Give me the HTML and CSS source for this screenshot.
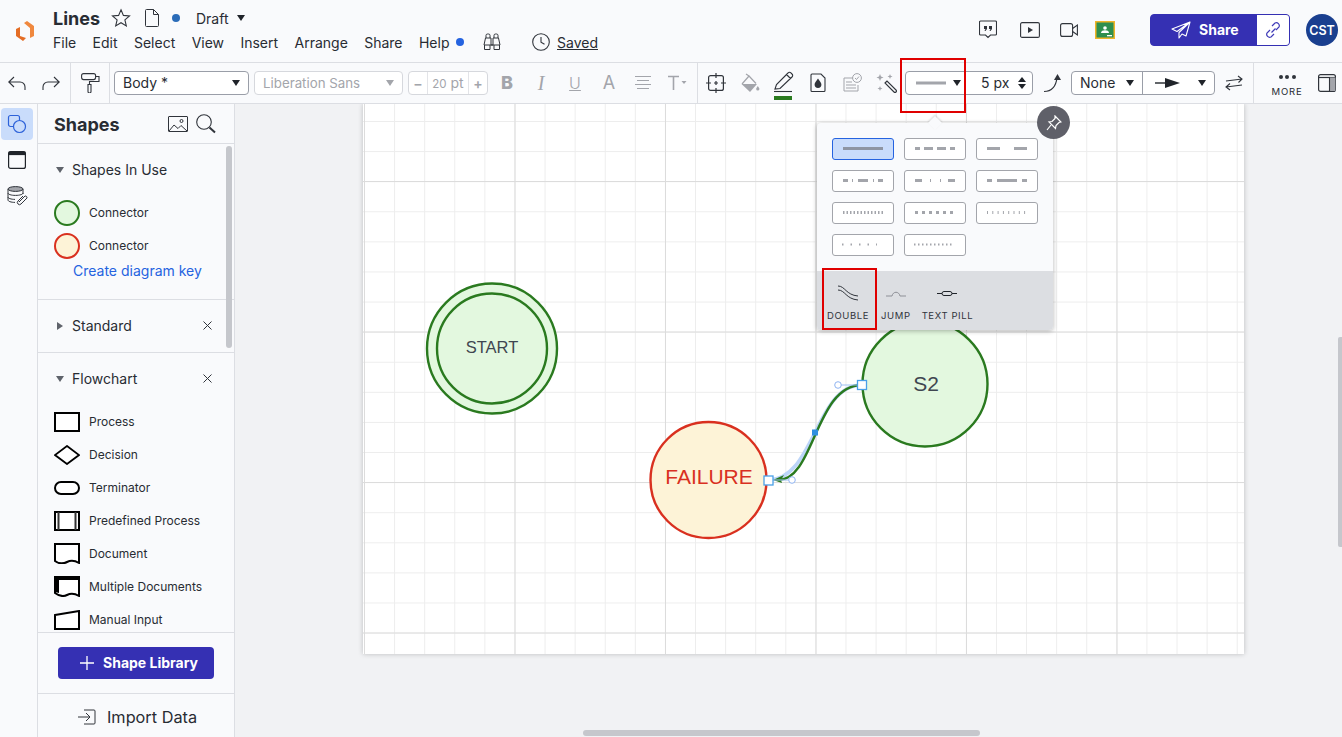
FILE: index.html
```html
<!DOCTYPE html>
<html lang="en">
<head>
<meta charset="utf-8">
<title>Lines</title>
<link rel="stylesheet" href="styles.css">
</head>
<body>
<header class="topbar">
  <svg class="logo" width="18" height="21" viewBox="0 0 18 21"><path d="M8 3 11 1l7 5v10l-4 2V8z" fill="#f0883e"/><path d="M0 9l4-2v9l6 2-3 3-7-5z" fill="#e46d25"/></svg>
  <div class="titles">
    <div class="title-row">
      <span class="doc-name">Lines</span>
      <svg class="star" width="20" height="20" viewBox="0 0 20 20"><path d="M10 1.800l2.400 5.600 6.100.5-4.600 4 1.400 6-5.300-3.200-5.300 3.200 1.400-6-4.600-4 6.100-.5z" fill="none" stroke="#30343b" stroke-width="1.100"/></svg>
      <svg class="doc" width="14" height="18" viewBox="0 0 14 18"><path d="M1.500.5h7l5 5v11a1 1 0 0 1-1 1h-11a1 1 0 0 1-1-1v-15a1 1 0 0 1 1-1zM8.500.5v5h5" fill="none" stroke="#30343b" stroke-width="1"/></svg>
      <span class="status-dot"></span>
      <span class="draft">Draft</span>
      <span class="caret draft-caret"></span>
    </div>
    <nav class="menu">
      <span>File</span><span>Edit</span><span>Select</span><span>View</span><span>Insert</span><span>Arrange</span><span>Share</span><span>Help</span>
      <span class="help-dot"></span>
      <svg class="binoculars" width="18" height="18" viewBox="0 0 18 18"><path d="M3 5V2.500A1.500 1.500 0 0 1 4.500 1h1A1.500 1.500 0 0 1 7 2.500V5M11 5V2.500A1.500 1.500 0 0 1 12.500 1h1A1.500 1.500 0 0 1 15 2.500V5M2.500 5H8v7H10V5h5.500l1.500 7H1zM1.500 12v4.500h5.500V12M11 12v4.500h5.500V12" fill="none" stroke="#30343b" stroke-width="1"/></svg>
      <svg class="clock" width="18" height="18" viewBox="0 0 18 18"><circle cx="9" cy="9" r="8.300" fill="none" stroke="#30343b" stroke-width="1.100"/><path d="M9 4v5.300l3.500 2" fill="none" stroke="#30343b" stroke-width="1.100"/></svg>
      <span class="saved">Saved</span>
    </nav>
  </div>
  <div class="top-actions">
    <svg width="18" height="20" viewBox="0 0 18 20"><path d="M1.500 1h15a1 1 0 0 1 1 1v12a1 1 0 0 1-1 1h-5L9 17.500 6.500 15h-5a1 1 0 0 1-1-1V2a1 1 0 0 1 1-1z" fill="none" stroke="#30343b" stroke-width="1.100"/><path d="M5 6h3v3l-1.500 2H5.500L6.500 9H5zM10 6h3v3l-1.500 2h-1l1-2H10z" fill="#30343b"/></svg>
    <svg width="20" height="16" viewBox="0 0 20 16"><rect x=".6" y=".6" width="18.800" height="14.800" rx="1.500" fill="none" stroke="#30343b" stroke-width="1.100"/><path d="M8 5l5 3-5 3z" fill="#30343b"/></svg>
    <svg width="18" height="14" viewBox="0 0 18 14"><rect x=".6" y=".6" width="12" height="12.800" rx="2" fill="none" stroke="#30343b" stroke-width="1.100"/><path d="M12.600 5.500l4.800-3.500v10l-4.800-3.500" fill="none" stroke="#30343b" stroke-width="1.100"/></svg>
    <svg class="classroom" width="20" height="18" viewBox="0 0 20 18"><rect width="20" height="18" fill="#f0b429"/><rect x="1.500" y="1.500" width="17" height="15" fill="#2f8f4e"/><circle cx="10" cy="7" r="1.800" fill="#fff"/><path d="M6 12c0-2 2-2.700 4-2.700s4 .7 4 2.700z" fill="#fff"/><rect x="12" y="14" width="5" height="1.300" fill="#fff"/></svg>
    <div class="share-btn">
      <div class="share-main">
        <svg width="20" height="18" viewBox="0 0 20 18"><path d="M19 1L1 8l5 2.500L19 1 8 11.500V17l3-4 4 2z" fill="none" stroke="#fff" stroke-width="1.100" stroke-linejoin="round"/></svg>
        <span>Share</span>
      </div>
      <div class="share-link">
        <svg width="18" height="18" viewBox="0 0 18 18"><path d="M7.500 11.500l4-4M6 9l-3 3a3 3 0 0 0 4 4l3-3M12 9l3-3a3 3 0 0 0-4-4L8 5" fill="none" stroke="#3f3bb8" stroke-width="1.200"/></svg>
      </div>
    </div>
    <div class="avatar">CST</div>
  </div>
</header>

<div class="toolbar">
  <div class="tgroup g-history">
    <svg width="18" height="18" viewBox="0 0 18 18"><path d="M6 3L.8 8 6 13M1 8h11a5 5 0 0 1 5 5v3" fill="none" stroke="#30343b" stroke-width="1.100"/></svg>
    <svg width="18" height="18" viewBox="0 0 18 18"><path d="M12 3l5.200 5L12 13M17 8H6a5 5 0 0 0-5 5v3" fill="none" stroke="#30343b" stroke-width="1.100"/></svg>
  </div>
  <div class="tgroup g-roller">
    <svg width="19" height="20" viewBox="0 0 19 20"><rect x=".6" y=".6" width="14" height="6" rx="2" fill="none" stroke="#30343b" stroke-width="1.100"/><path d="M14.600 3.500h3.400v5H8.500v3M7 11.500h3v7a1.500 1.500 0 0 1-3 0z" fill="none" stroke="#30343b" stroke-width="1.100"/></svg>
  </div>
  <div class="tgroup g-text">
    <div class="select sel-body"><span>Body *</span><i class="caret"></i></div>
    <div class="select sel-font disabled"><span>Liberation Sans</span><i class="caret"></i></div>
    <div class="size-group disabled">
      <b class="size-btn">&minus;</b><span class="size-val"><em>20</em> pt</span><b class="size-btn">+</b>
    </div>
    <div class="ticons">
      <span class="glyph g-b">B</span>
      <span class="glyph g-i">I</span>
      <span class="glyph g-u">U</span>
      <span class="glyph g-a">A</span>
      <svg width="20" height="16" viewBox="0 0 20 16"><path d="M2 1.500h16M4 5.500h12M2 9.500h16M4 13.500h12" stroke="#a3a5ab" stroke-width="1.100"/></svg>
      <svg width="20" height="16" viewBox="0 0 20 16"><path d="M1 1.500h11M6.500 1.500V15" stroke="#a3a5ab" stroke-width="1.600" fill="none"/><path d="M14.500 6h5l-2.500 3z" fill="#a3a5ab"/></svg>
    </div>
  </div>
  <div class="tgroup g-shape">
    <svg width="20" height="20" viewBox="0 0 20 20"><rect x="2.600" y="2.600" width="14.800" height="14.800" rx="2" fill="none" stroke="#30343b" stroke-width="1.200"/><path d="M10 0v5M10 15v5M0 10h5M15 10h5M8 10h4M10 8v4" stroke="#30343b" stroke-width="1.200"/></svg>
    <svg width="20" height="20" viewBox="0 0 20 20"><path d="M2 11L9 3l7 7.500M6 1l3 2" fill="none" stroke="#a3a5ab" stroke-width="1.200"/><path d="M1.500 11H17l-7 8z" fill="#a3a5ab"/><path d="M17.800 13c.9 1.400 1.600 2.100 1.600 3a1.600 1.600 0 0 1-3.200 0c0-.9.700-1.600 1.600-3z" fill="#a3a5ab"/></svg>
    <svg width="20" height="36" viewBox="0 0 20 36"><path d="M1 24l1.500-4.500L14 8a2 2 0 0 1 3 0l1 1a2 2 0 0 1 0 3L6 23.500zM12.500 9.500l4 4" fill="none" stroke="#30343b" stroke-width="1.100"/><path d="M0 26.500h18" stroke="#30343b" stroke-width="1.100"/><rect y="31" width="18" height="4" fill="#2a7a1f"/></svg>
    <svg width="20" height="20" viewBox="0 0 20 20"><path d="M3.500 1h9l4 4v12.500a1 1 0 0 1-1 1h-12a1 1 0 0 1-1-1v-15.500a1 1 0 0 1 1-1z" transform="translate(.5 0)" fill="none" stroke="#30343b" stroke-width="1.100"/><path d="M10 5.500c2 2.800 3.400 4.300 3.400 6a3.400 3.400 0 0 1-6.800 0c0-1.700 1.400-3.200 3.400-6z" fill="#30343b"/></svg>
    <svg width="20" height="20" viewBox="0 0 20 20"><path d="M11 5H2v13h14v-6M4 9h6M4 12h10M4 15h10" fill="none" stroke="#a3a5ab" stroke-width="1"/><circle cx="15" cy="5" r="4.400" fill="none" stroke="#a3a5ab"/><path d="M13 5l1.500 1.500 2.500-3" fill="none" stroke="#a3a5ab"/></svg>
    <svg width="21" height="21" viewBox="0 0 21 21"><path d="M9 10l2-2 9 9a1.400 1.400 0 0 1-2 2z" fill="none" stroke="#30343b" stroke-width="1.100"/><path d="M4 1l1 2.500 2.500 1L5 5.500 4 8 3 5.500.5 4.500 3 3.500zM14 1l.7 1.800 1.800.7-1.800.7L14 6l-.7-1.800-1.800-.7 1.800-.7zM4 13l.7 1.800 1.800.7-1.800.7L4 18l-.7-1.800-1.800-.7 1.800-.7z" fill="#a3a5ab"/></svg>
    <div class="select sel-line">
      <svg width="30" height="4" viewBox="0 0 30 4"><rect width="30" height="3" y=".5" fill="#a3a5ab"/></svg>
      <i class="caret"></i>
      <span class="px">5 px</span>
      <span class="stepper"><i class="up"></i><i class="down"></i></span>
    </div>
    <svg class="ic-route" width="18" height="20" viewBox="0 0 18 20"><path d="M0 18.500c8 0 12-5 13-14" fill="none" stroke="#30343b" stroke-width="1.200"/><path d="M13.500 1l3.500 6h-7z" fill="#30343b"/></svg>
    <div class="select-pair">
      <div class="pair-a"><span>None</span><i class="caret"></i></div>
      <div class="pair-b">
        <svg width="26" height="10" viewBox="0 0 26 10"><path d="M0 5h14" stroke="#20242a" stroke-width="1.400"/><path d="M10 0l15 5-15 5z" fill="#20242a"/></svg>
        <i class="caret"></i>
      </div>
    </div>
    <svg class="ic-swap" width="18" height="16" viewBox="0 0 18 16"><path d="M1 6l16-2M13 1l4 3-3.500 3.500M17 10L1 12M5 8.500L1 12l4 3" fill="none" stroke="#30343b" stroke-width="1.100"/></svg>
  </div>
  <div class="tgroup g-more">
    <div class="more"><span class="dots"><i></i><i></i><i></i></span><span class="more-label">MORE</span></div>
    <svg class="ic-panel" width="18" height="18" viewBox="0 0 18 18"><rect x=".6" y=".6" width="16.800" height="16.800" rx="2" fill="none" stroke="#30343b" stroke-width="1.200"/><path d="M.6 3.500h16.800" stroke="#30343b" stroke-width="1.200"/><rect x="12" y="3.500" width="5.400" height="13.500" fill="#a3a5ab"/><path d="M11.500 3.500V17" stroke="#30343b" stroke-width="1.100"/></svg>
  </div>
</div>

<main class="workspace">
  <aside class="rail">
    <div class="rail-item active">
      <svg width="20" height="20" viewBox="0 0 20 20"><rect x="1.500" y="1.500" width="11" height="11" rx="2" fill="none" stroke="#2d62d9" stroke-width="1.200"/><circle cx="12.500" cy="12.500" r="6" fill="#c9dcfb" stroke="#2d62d9" stroke-width="1.200"/></svg>
    </div>
    <div class="rail-item">
      <svg width="18" height="18" viewBox="0 0 18 18"><rect x=".6" y=".6" width="16.800" height="16.800" rx="2" fill="none" stroke="#20242a" stroke-width="1.200"/><rect x=".6" y=".6" width="16.800" height="3.500" fill="#20242a"/></svg>
    </div>
    <div class="rail-item">
      <svg width="21" height="20" viewBox="0 0 21 20"><ellipse cx="8.500" cy="3" rx="7.500" ry="2.400" fill="#a3a5ab" stroke="#30343b"/><path d="M1 3v11c0 1.300 3 2.400 7 2.400M16 3v5M1 7c0 1.300 3 2.400 7.500 2.400S16 8.300 16 7M1 11c0 1.300 3 2.400 7 2.400" fill="none" stroke="#30343b"/><path d="M12 16l6-6a1.700 1.700 0 0 1 2 2l-6 6a2 2 0 0 1-3-3l5-5" fill="none" stroke="#30343b"/></svg>
    </div>
  </aside>
  <aside class="sidebar">
    <div class="side-head">
      <h2>Shapes</h2>
      <svg class="ic-img" width="20" height="16" viewBox="0 0 20 16"><rect x=".5" y=".5" width="19" height="15" rx=".5" fill="none" stroke="#30343b"/><path d="M1 15l5-6 4 3.500 3-3 6 5.500" fill="none" stroke="#30343b"/><circle cx="13.500" cy="5" r="1.500" fill="none" stroke="#30343b"/></svg>
      <svg class="ic-search" width="20" height="20" viewBox="0 0 20 20"><circle cx="8" cy="8" r="7.300" fill="none" stroke="#30343b" stroke-width="1.100"/><path d="M13.500 13.500l5.500 5" stroke="#30343b" stroke-width="2"/></svg>
    </div>
    <div class="side-scroll">
      <section class="section in-use">
        <div class="sec-head"><i class="tri down"></i><span>Shapes In Use</span></div>
        <div class="row"><span class="swatch-circle green"></span><span>Connector</span></div>
        <div class="row"><span class="swatch-circle red"></span><span>Connector</span></div>
        <a class="key-link">Create diagram key</a>
      </section>
      <section class="section">
        <div class="sec-head"><i class="tri right"></i><span>Standard</span><svg class="close" width="9" height="9" viewBox="0 0 9 9"><path d="M.5.500l8 8M8.500.500l-8 8" stroke="#30343b" stroke-width="1"/></svg></div>
      </section>
      <section class="section flow">
        <div class="sec-head"><i class="tri down"></i><span>Flowchart</span><svg class="close" width="9" height="9" viewBox="0 0 9 9"><path d="M.5.500l8 8M8.500.500l-8 8" stroke="#30343b" stroke-width="1"/></svg></div>
        <div class="row"><svg width="26" height="20" viewBox="0 0 26 20"><rect x="1" y="1" width="24" height="18" fill="#fff" stroke="#000" stroke-width="2"/></svg><span>Process</span></div>
        <div class="row"><svg width="26" height="20" viewBox="0 0 26 20"><path d="M13 1l12 9-12 9L1 10z" fill="#fff" stroke="#000" stroke-width="1.800"/></svg><span>Decision</span></div>
        <div class="row"><svg width="26" height="14" viewBox="0 0 26 14"><rect x="1" y="1" width="24" height="12" rx="6" fill="#fff" stroke="#000" stroke-width="2"/></svg><span>Terminator</span></div>
        <div class="row"><svg width="26" height="20" viewBox="0 0 26 20"><rect x="1" y="1" width="24" height="18" fill="#fff" stroke="#000" stroke-width="2"/><path d="M4.500 1v18M21.500 1v18" stroke="#333" stroke-width="2"/></svg><span>Predefined Process</span></div>
        <div class="row"><svg width="26" height="21" viewBox="0 0 26 21"><path d="M1 1h24v19c-5-3-8-3-12-1s-8 2-12-1z" fill="#fff" stroke="#000" stroke-width="2"/></svg><span>Document</span></div>
        <div class="row"><svg width="26" height="21" viewBox="0 0 26 21"><path d="M1 1h24v19c-5-3-8-3-12-1s-8 1-12-2z" fill="#fff" stroke="#000" stroke-width="2"/><path d="M1 1h24v3H5v13l-4-1z" fill="#000"/></svg><span>Multiple Documents</span></div>
        <div class="row"><svg width="26" height="20" viewBox="0 0 26 20"><path d="M1 5l24-4v18H1z" fill="#fff" stroke="#000" stroke-width="2"/></svg><span>Manual Input</span></div>
      </section>
      <div class="side-thumb"></div>
    </div>
    <div class="side-lib">
      <div class="lib-btn"><svg width="14" height="14" viewBox="0 0 14 14"><path d="M7 0v14M0 7h14" stroke="#fff" stroke-width="1.300"/></svg><span>Shape Library</span></div>
    </div>
    <div class="side-import">
      <svg width="18" height="16" viewBox="0 0 18 16"><path d="M0 8h12M8 4l4 4-4 4M6 1h10a1 1 0 0 1 1 1v12a1 1 0 0 1-1 1H6" fill="none" stroke="#30343b" stroke-width="1"/></svg>
      <span>Import Data</span>
    </div>
  </aside>
  <section class="canvas">
    <div class="page">
      <svg class="diagram" width="881" height="550" viewBox="363 104 881 550">
        <circle cx="492" cy="348.500" r="65" fill="#e3f8df" stroke="#2a7a1f" stroke-width="2.400"/>
        <circle cx="492" cy="348.500" r="55" fill="none" stroke="#2a7a1f" stroke-width="2.400"/>
        <text x="492" y="353" text-anchor="middle" class="lbl lbl-start">START</text>
        <circle cx="925" cy="384" r="62.500" fill="#e3f8df" stroke="#2a7a1f" stroke-width="2.400"/>
        <text x="926" y="391" text-anchor="middle" class="lbl lbl-s2">S2</text>
        <circle cx="708.500" cy="480" r="58" fill="#fdf3d7" stroke="#d9301f" stroke-width="2.400"/>
        <text x="709" y="484" text-anchor="middle" class="lbl lbl-fail">FAILURE</text>
        <path d="M862 385C815 385 815 480 768 480" fill="none" stroke="#bcd5f9" stroke-width="3.600"/>
        <path d="M862 385C815 385 815 480 778 480" fill="none" stroke="#2a7a1f" stroke-width="2.400"/>
        <path d="M773 480l11-5-3 5 1 3z" fill="#2a7a1f"/>
        <path d="M862 385h-24M768 480h24" stroke="#9cc0f5" stroke-width="1"/>
        <circle cx="838" cy="385" r="3.300" fill="#fff" stroke="#8fb4f2"/>
        <circle cx="792" cy="480" r="3.300" fill="#fff" stroke="#8fb4f2"/>
        <rect x="812" y="429.500" width="6" height="6" fill="#2f8fe0"/>
        <rect x="857.500" y="380.500" width="9" height="9" fill="#fff" stroke="#4aa0e8" stroke-width="1.300"/>
        <rect x="764" y="476" width="9" height="9" fill="#fff" stroke="#4aa0e8" stroke-width="1.300"/>
      </svg>
    </div>

    <div class="popup">
      <span class="popup-arrow"></span>
      <div class="swatches">
        <div class="swatch selected"><svg width="62" height="22"><path d="M11 10.500H51" stroke="#8e95a3" stroke-width="3"/></svg></div>
        <div class="swatch"><svg width="62" height="22"><path d="M11 10.500H51" stroke="#a3a5ab" stroke-width="3" stroke-dasharray="5 4 9 4 9 4 5"/></svg></div>
        <div class="swatch"><svg width="62" height="22"><path d="M11 10.500H51" stroke="#a3a5ab" stroke-width="3" stroke-dasharray="13 14 13"/></svg></div>
        <div class="swatch"><svg width="62" height="22"><path d="M11 10.500H51" stroke="#a3a5ab" stroke-width="3" stroke-dasharray="5 4 1 5 10 5 1 4 5"/></svg></div>
        <div class="swatch"><svg width="62" height="22"><path d="M11 10.500H51" stroke="#a3a5ab" stroke-width="3" stroke-dasharray="7 8 1 9 1 7 7"/></svg></div>
        <div class="swatch"><svg width="62" height="22"><path d="M11 10.500H51" stroke="#a3a5ab" stroke-width="3" stroke-dasharray="5 5 20 5 5"/></svg></div>
        <div class="swatch"><svg width="62" height="22"><path d="M11 10.500H51" stroke="#a3a5ab" stroke-width="3" stroke-dasharray="1.500 2"/></svg></div>
        <div class="swatch"><svg width="62" height="22"><path d="M11 10.500H51" stroke="#a3a5ab" stroke-width="3" stroke-dasharray="3 4"/></svg></div>
        <div class="swatch"><svg width="62" height="22"><path d="M11 10.500H51" stroke="#a3a5ab" stroke-width="3" stroke-dasharray="1 4.300"/></svg></div>
        <div class="swatch"><svg width="62" height="22"><path d="M10 10.500H45" stroke="#a3a5ab" stroke-width="2" stroke-dasharray="1.500 7"/></svg></div>
        <div class="swatch"><svg width="62" height="22"><path d="M10 10.500H49" stroke="#a3a5ab" stroke-width="2" stroke-dasharray="1.500 2.500"/></svg></div>
      </div>
      <div class="line-types">
        <div class="ltype t-double"><svg width="22" height="17" viewBox="0 0 22 17"><path d="M1 1c7 0 8 9 20 10M1 5c7 0 8 9 20 10" fill="none" stroke="#30343b" stroke-width="1"/></svg><span>DOUBLE</span></div>
        <div class="ltype t-jump"><svg width="22" height="17" viewBox="0 0 22 17"><path d="M1 11h6c1-5 7-5 8 0h6" fill="none" stroke="#8e9097" stroke-width="1"/></svg><span>JUMP</span></div>
        <div class="ltype t-pill"><svg width="22" height="17" viewBox="0 0 22 17"><path d="M1 8.500h20" stroke="#20242a"/><rect x="6" y="6.500" width="10" height="4" rx="2" fill="#dcdee2" stroke="#20242a"/></svg><span>TEXT PILL</span></div>
      </div>
    </div>
    <div class="pin">
      <svg width="16" height="16" viewBox="0 0 16 16"><path d="M9 1l6 6-2 .5-3 3-.5 3L3 7l3-.5 3-3z" fill="none" stroke="#fff" stroke-width="1.200"/><path d="M5 10l-4 5" stroke="#fff" stroke-width="1.200"/></svg>
    </div>
    <div class="vthumb"></div>
    <div class="hthumb"></div>
  </section>
</main>
<div class="marker marker-line"></div>
<div class="marker marker-double"></div>
</body>
</html>
```
FILE: styles.css
```css
* { box-sizing: border-box; }
html, body { margin: 0; height: 100%; }
body {
  position: relative;
  width: 1342px;
  height: 737px;
  overflow: hidden;
  background: #f9fafc;
  color: #282c33;
  font-family: Inter, "Liberation Sans", sans-serif;
  font-size: 14px;
}
svg { display: block; flex: none; }
i, em { font-style: normal; }

/* carets */
.caret {
  display: block;
  width: 0; height: 0;
  border-left: 4.5px solid transparent;
  border-right: 4.5px solid transparent;
  border-top: 6px solid #20242a;
}

/* top bar */
.topbar {
  height: 63px;
  display: flex;
  align-items: flex-start;
  padding-left: 16px;
  border-bottom: 1px solid #dcdee3;
}
.logo { margin-top: 20px; }
.titles { margin-left: 19px; width: 560px; }
.title-row { display: flex; align-items: center; height: 20px; margin-top: 8px; }
.doc-name { font-size: 18px; font-weight: 700; width: 58px; }
.star { margin-left: 0; }
.doc { margin-left: 14px; }
.status-dot { width: 8px; height: 8px; border-radius: 50%; background: #2b6cb8; margin-left: 13px; }
.draft { margin-left: 16px; width: 41px; }
.menu { display: flex; align-items: center; gap: 16.400px; height: 20px; margin-top: 4px; }
.help-dot { width: 8px; height: 8px; border-radius: 50%; background: #2563e0; margin-left: -10px; }
.binoculars { margin-left: 3px; }
.clock { margin-left: 14px; }
.saved { margin-left: -9px; text-decoration: underline; }

.top-actions { margin-left: auto; display: flex; align-items: center; height: 32px; margin-top: 14px; padding-right: 4px; }
.top-actions > svg:nth-child(1) { margin-right: 23px; }
.top-actions > svg:nth-child(2) { margin-right: 20px; }
.top-actions > svg:nth-child(3) { margin-right: 17px; }
.classroom { margin-right: 35px; }
.share-btn {
  width: 140px; height: 32px;
  display: flex;
  background: #3530b3;
  border: 1px solid #3530b3;
  border-radius: 4px;
  overflow: hidden;
}
.share-main { width: 106px; display: flex; align-items: center; padding: 0 0 1px 20px; gap: 8px; color: #fff; font-weight: 700; font-size: 14px; }
.share-link { flex: 1; background: #fff; display: flex; align-items: center; justify-content: center; }
.avatar {
  width: 32px; height: 32px; margin-left: 16px;
  border-radius: 50%;
  background: #1a3f8f;
  color: #fff;
  font-size: 12.500px; font-weight: 600;
  display: flex; align-items: center; justify-content: center;
}

/* toolbar */
.toolbar { height: 41px; display: flex; border-bottom: 1px solid #dcdee3; }
.tgroup { display: flex; align-items: center; height: 40px; border-right: 1px solid #dcdee3; }
.g-history { width: 71px; padding-left: 8px; gap: 16px; }
.g-roller { width: 39px; padding-left: 10px; }
.g-text { width: 588px; padding-left: 4px; }
.g-shape { width: 556px; padding-left: 8px; gap: 14px; }
.g-more { flex: 1; border-right: 0; padding-left: 16px; }

.select {
  height: 24px;
  display: flex; align-items: center;
  justify-content: space-between;
  border: 1px solid #9a9ea8;
  border-radius: 4px;
  background: #fff;
  padding: 0 8px 1px;
}
.sel-body { width: 135px; }
.sel-font { width: 149px; margin-left: 5px; font-size: 13.300px; }
.disabled { color: #a3a5ab; border-color: #d6d8dd; }
.disabled .caret { border-top-color: #a3a5ab; }
.size-group {
  width: 80px; height: 24px; margin-left: 5px;
  display: flex; align-items: center;
  border: 1px solid #d6d8dd; border-radius: 4px;
  background: #fff;
  color: #a3a5ab;
}
.size-btn { width: 18px; text-align: center; font-weight: 600; }
.size-val { flex: 1; height: 22px; line-height: 21px; text-align: center; font-size: 14px; border-left: 1px solid #e3e4e8; border-right: 1px solid #e3e4e8; white-space: nowrap; }
.size-val em { font-size: 11.500px; }
.ticons { display: flex; align-items: center; gap: 14px; margin-left: 9px; }
.glyph { width: 20px; text-align: center; color: #a3a5ab; font-size: 18px; line-height: 20px; }
.g-b { font-weight: 800; }
.g-i { font-family: "Liberation Serif", serif; font-style: italic; font-size: 20px; }
.g-u { text-decoration: underline; font-size: 16px; font-weight: 300; }
.g-a { font-weight: 400; }

.sel-line { width: 128px; margin-left: -6px; padding: 0 4px 1px 10px; justify-content: flex-start; border-color: #9a9ea8; }
.sel-line .caret { margin-left: 7px; }
.px { margin-left: 20px; white-space: nowrap; }
.stepper { display: flex; flex-direction: column; gap: 2px; margin-left: 9px; }
.stepper i { display: block; width: 0; height: 0; border-left: 4px solid transparent; border-right: 4px solid transparent; }
.stepper .up { border-bottom: 5px solid #20242a; }
.stepper .down { border-top: 5px solid #20242a; }
.ic-route { margin-left: -3px; }
.select-pair {
  width: 144px; height: 24px; margin-left: -5px;
  display: flex;
  border: 1px solid #9a9ea8; border-radius: 4px; background: #fff;
}
.pair-a { width: 71px; display: flex; align-items: center; justify-content: space-between; padding: 0 8px 1px; border-right: 1px solid #9a9ea8; }
.pair-b { flex: 1; display: flex; align-items: center; justify-content: space-between; padding: 0 8px 0 12px; }
.ic-swap { margin-left: -4px; }
.more { width: 34px; display: flex; flex-direction: column; align-items: center; }
.dots { display: flex; gap: 2.500px; margin-top: 5px; }
.dots i { width: 4px; height: 4px; border-radius: 50%; background: #30343b; }
.more-label { font-size: 9.500px; letter-spacing: .8px; margin-top: 7px; }
.ic-panel { margin-left: 14px; }

/* workspace */
.workspace { height: 633px; display: flex; }
.rail { width: 38px; border-right: 1px solid #dcdee3; padding-top: 4px; }
.rail-item { width: 32px; height: 32px; margin-left: 1px; display: flex; align-items: center; justify-content: center; margin-bottom: 4px; }
.rail-item.active { background: #c9dcfb; border-radius: 4px; }
.rail-item:nth-child(3) { margin-top: 4px; }

.sidebar { width: 197px; border-right: 1px solid #dcdee3; display: flex; flex-direction: column; }
.side-head { height: 40px; flex: none; display: flex; align-items: center; padding-left: 16px; border-bottom: 1px solid #dcdee3; }
.side-head h2 { margin: 2px 0 0; font-size: 18px; font-weight: 700; width: 114px; }
.ic-search { margin-left: 8px; }
.side-scroll { position: relative; height: 489px; flex: none; overflow: hidden; border-bottom: 1px solid #dcdee3; }
.section { border-bottom: 1px solid #dcdee3; }
.section:last-of-type { border-bottom: 0; }
.in-use { height: 156px; }
.sec-head { height: 52px; position: relative; display: flex; align-items: center; padding: 0 0 2px 34px; font-size: 14px; }
.tri { position: absolute; width: 0; height: 0; }
.tri.down { left: 18px; top: 23px; border-left: 4px solid transparent; border-right: 4px solid transparent; border-top: 6px solid #5f636b; }
.tri.right { left: 19px; top: 22px; border-top: 4px solid transparent; border-bottom: 4px solid transparent; border-left: 6px solid #5f636b; }
.close { margin-left: auto; margin-right: 22px; }
.row { height: 33px; display: flex; align-items: center; padding-left: 16px; font-size: 12px; }
.row svg { margin-right: 9px; }
.swatch-circle { width: 26px; height: 26px; border-radius: 50%; margin-right: 9px; border: 2px solid; }
.swatch-circle.green { background: #e3f8df; border-color: #2a7a1f; }
.swatch-circle.red { background: #fdf3d7; border-color: #d9301f; }
.in-use .row:first-of-type { margin-top: -1px; }
.key-link { display: block; margin-left: 35px; line-height: 18px; color: #2563e0; font-size: 14px; }
.side-thumb { position: absolute; right: 2px; top: 2px; width: 6px; height: 202px; border-radius: 3px; background: #c5c7cc; }
.side-lib { height: 61px; flex: none; padding: 14px 0 0 20px; border-bottom: 1px solid #dcdee3; }
.lib-btn {
  width: 156px; height: 32px;
  display: flex; align-items: center; padding: 0 0 1px 22px; gap: 9px;
  background: #3530b3; border-radius: 4px;
  color: #fff; font-weight: 700; font-size: 14px;
}
.side-import { flex: 1; display: flex; align-items: center; padding: 2px 0 0 40px; gap: 11px; font-size: 16.300px; }

/* canvas */
.canvas { position: relative; flex: 1; background: #f1f2f4; overflow: hidden; }
.page {
  position: absolute; left: 128px; top: 0;
  width: 881px; height: 550px;
  background-color: #fff;
  background-image:
    linear-gradient(to right, #dcdcdc 1px, transparent 1px),
    linear-gradient(to bottom, #dcdcdc 1px, transparent 1px),
    linear-gradient(to right, #ededed 1px, transparent 1px),
    linear-gradient(to bottom, #ededed 1px, transparent 1px);
  background-size: 150.500px 150.500px, 150.500px 150.500px, 30.100px 30.100px, 30.100px 30.100px;
  background-position: 1px 77px, 1px 77px, 1px 17px, 1px 17px;
  box-shadow: 0 0 5px rgba(0,0,0,.22);
}
.diagram { position: absolute; left: 0; top: 0; }
.lbl { font-family: "Liberation Sans", Arial, sans-serif; }
.lbl-start { font-size: 16.500px; fill: #3f4650; }
.lbl-s2 { font-size: 21px; fill: #3f4650; }
.lbl-fail { font-size: 21px; fill: #d9301f; }

.popup {
  position: absolute; left: 582px; top: 19px;
  width: 236px; height: 207px;
  background: #f9fafc;
  border-radius: 4px;
  box-shadow: 0 1px 5px rgba(0,0,0,.3);
  display: flex; flex-direction: column;
}
.popup-arrow {
  position: absolute; left: 113px; top: -5px;
  width: 10px; height: 10px;
  background: #f9fafc;
  transform: rotate(45deg);
  box-shadow: -1px -1px 2px rgba(0,0,0,.14);
}
.swatches {
  position: relative;
  height: 148px;
  padding: 15px 0 0 15px;
  display: grid;
  grid-template-columns: repeat(3, 62px);
  grid-auto-rows: 22px;
  gap: 10px;
}
.swatch { background: #fff; border: 1px solid #a3a5ab; border-radius: 3px; overflow: hidden; }
.swatch svg { margin: -1px; }
.swatch.selected { background: #c9dcfb; border-color: #2563e0; }
.line-types {
  flex: 1;
  background: #dcdee2;
  border-radius: 0 0 4px 4px;
  display: flex;
  padding-left: 10px;
  gap: 12px;
}
.ltype { display: flex; flex-direction: column; align-items: center; padding-top: 14px; font-size: 9.500px; letter-spacing: .6px; color: #30343b; white-space: nowrap; }
.ltype span { margin-top: 8px; }
.t-pill { margin-left: -1px; }
.pin {
  position: absolute; left: 802px; top: 2px;
  width: 33px; height: 33px;
  border-radius: 50%;
  background: #5f6069;
  display: flex; align-items: center; justify-content: center;
}
.vthumb { position: absolute; right: 0; top: 233px; width: 4px; height: 210px; background: #c5c7cc; border-radius: 2px 0 0 2px; }
.hthumb { position: absolute; left: 348px; bottom: 1px; width: 397px; height: 6px; background: #c5c7cc; border-radius: 3px; }

/* annotation boxes */
.marker { position: absolute; border: 2px solid #e00000; }
.marker-line { left: 900px; top: 58px; width: 66px; height: 55px; }
.marker-double { left: 822px; top: 268px; width: 55px; height: 62px; }
```
